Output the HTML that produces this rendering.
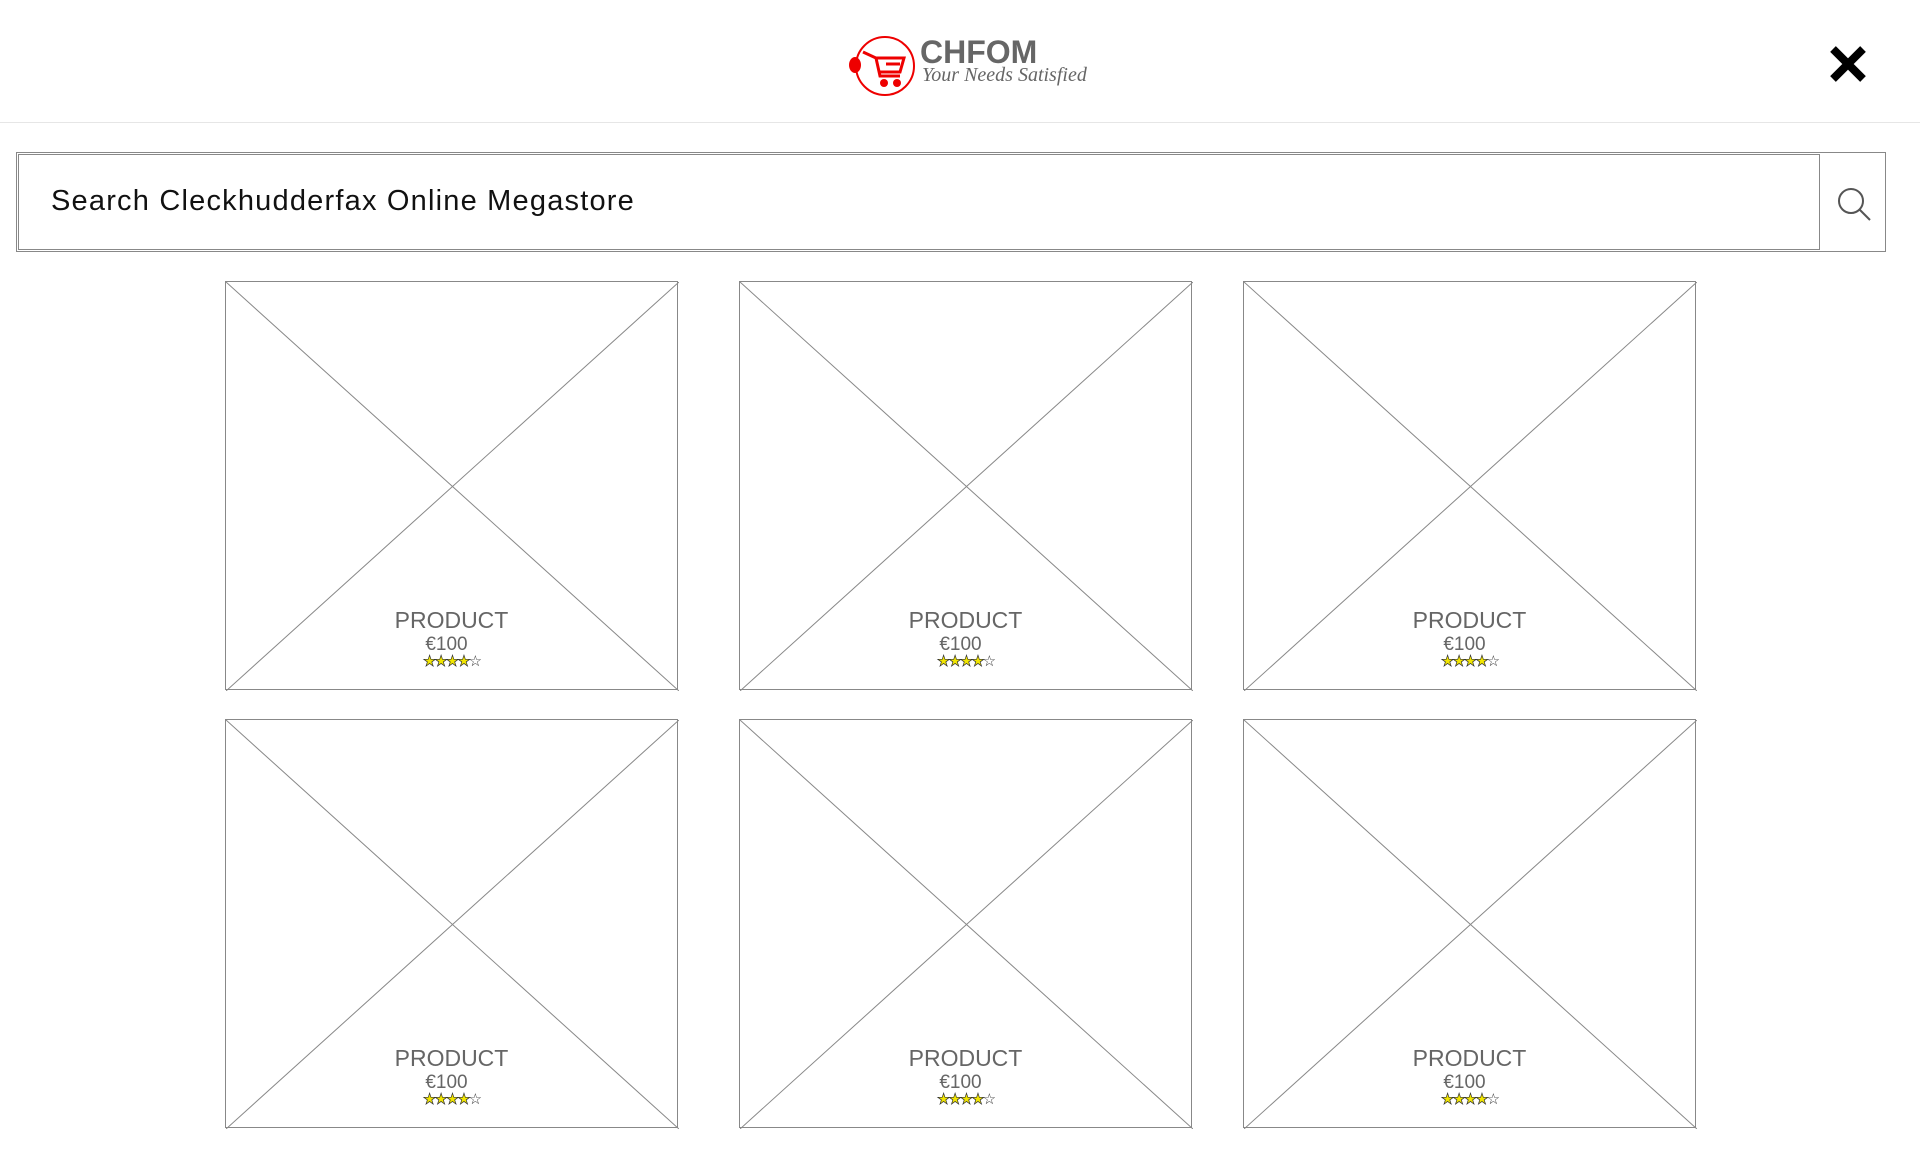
<!DOCTYPE html>
<html><head><meta charset="utf-8"><style>
body{margin:0;width:1920px;height:1158px;background:#fff;font-family:"Liberation Sans",sans-serif;position:relative;overflow:hidden}
.hdr{position:absolute;left:0;top:0;width:1920px;height:122px;border-bottom:1px solid #e6e6e6}
.card{position:absolute;width:453px;height:409px;border:1px solid #888;box-sizing:border-box}
.card svg{position:absolute;left:0;top:0}
.t{position:absolute;left:0;width:100%;text-align:center;color:#666}
.p{top:325px;font-size:23px}
.pr{top:352px;font-size:19px;margin-left:-5px}
.st{top:370px;font-size:15px;color:#333;letter-spacing:-2px;margin-left:0}
.st b{color:#f2e600;-webkit-text-stroke:0.7px #333;font-weight:normal}
</style></head><body>
<div class="hdr"></div>
<svg style="position:absolute;left:840px;top:34px" width="80" height="64" viewBox="0 0 80 64">
<circle cx="45" cy="32" r="29" fill="none" stroke="#e00" stroke-width="2"/>
<ellipse cx="15" cy="31" rx="6" ry="8" fill="#e00"/>
<path d="M23 18 L36 24 L40 42 L60 42 M36 24 L64 24 L60 38 L40 38 M46 30 L60 30" fill="none" stroke="#e00" stroke-width="3"/>
<circle cx="44" cy="49" r="4" fill="#e00"/><circle cx="57" cy="49" r="4" fill="#e00"/>
</svg>
<div style="position:absolute;left:920px;top:36px;font-size:32px;font-weight:bold;color:#666;line-height:1">CHFOM</div>
<div style="position:absolute;left:922px;top:64px;font-size:20px;font-style:italic;color:#666;font-family:'Liberation Serif',serif">Your Needs Satisfied</div>
<svg style="position:absolute;left:1828px;top:45px" width="40" height="38" viewBox="0 0 40 38"><path d="M5 4 L35 34 M35 4 L5 34" stroke="#000" stroke-width="8"/></svg>
<div style="position:absolute;left:16px;top:152px;width:1870px;height:100px;border:1px solid #888;box-sizing:border-box"></div>
<div style="position:absolute;left:18px;top:154px;width:1802px;height:96px;border:1px solid #888;box-sizing:border-box"></div>
<div style="position:absolute;left:51px;top:185px;font-size:29px;letter-spacing:1.2px;color:#111">Search Cleckhudderfax Online Megastore</div>
<svg style="position:absolute;left:1836px;top:186px" width="36" height="36" viewBox="0 0 36 36"><circle cx="15" cy="15" r="12" fill="none" stroke="#555" stroke-width="2"/><path d="M24 24 L34 34" stroke="#555" stroke-width="2"/></svg>
<div id="g"></div>
<script>
var xs=[225,739,1243],ys=[281,719],h='';
ys.forEach(function(y){xs.forEach(function(x){
h+='<div class="card" style="left:'+x+'px;top:'+y+'px"><svg width="453" height="409"><path d="M0 0L453 409M453 0L0 409" stroke="#888" stroke-width="1"/></svg><div class="t p">PRODUCT</div><div class="t pr">€100</div><div class="t st"><b>★★★★</b>☆</div></div>';});});
document.getElementById('g').innerHTML=h;
</script>
</body></html>
